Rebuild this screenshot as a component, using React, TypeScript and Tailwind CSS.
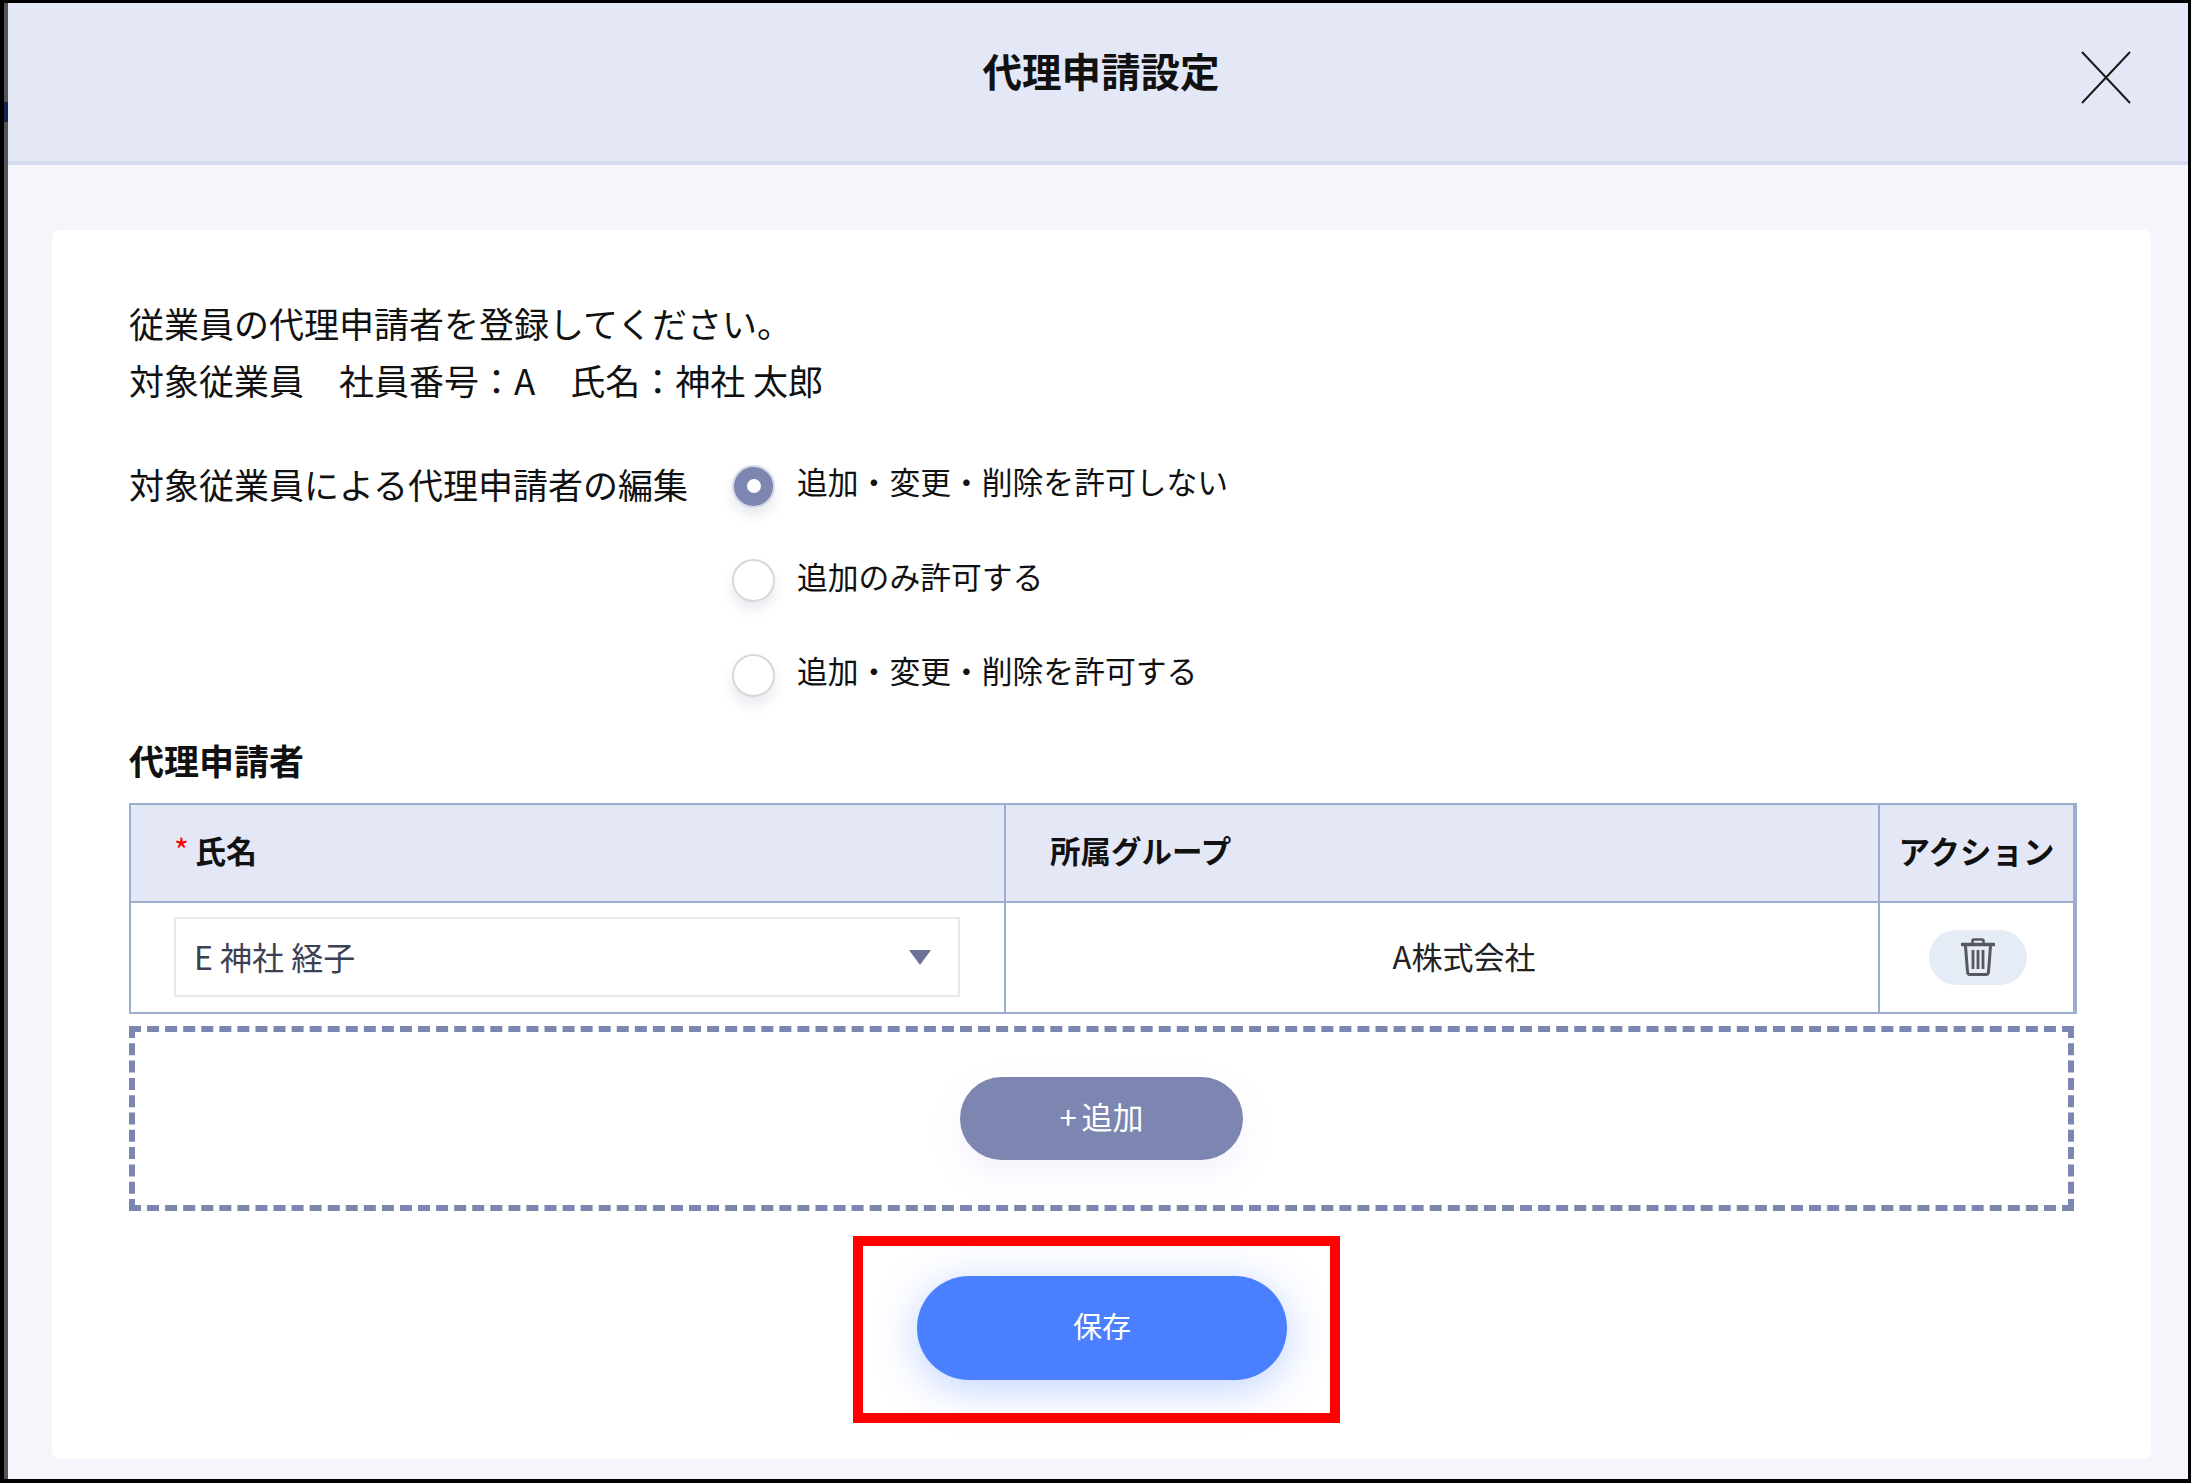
import React from "react";

function Radio({ checked, label }: { checked?: boolean; label: string }) {
  return (
    <div className="flex h-[94.5px] items-center">
      <span
        className={
          checked
            ? "flex h-[43px] w-[43px] items-center justify-center rounded-full border-2 border-[#d6d8e4] bg-[#7d86b0] shadow-[0_8px_12px_rgba(120,125,160,0.16)]"
            : "flex h-[43px] w-[43px] items-center justify-center rounded-full border-2 border-[#d8d8d8] bg-white shadow-[0_8px_12px_rgba(120,125,160,0.16)]"
        }
      >
        {checked ? <span className="h-[14px] w-[14px] rounded-full bg-white" /> : null}
      </span>
      <span className="mb-[10px] ml-[22px] text-[30.8px] leading-[48px] text-[#111]">{label}</span>
    </div>
  );
}

export default function App() {
  return (
    <div className="relative h-[1483px] w-[2191px] bg-white font-['Noto_Sans_CJK_JP','Noto_Sans',sans-serif]">
      <div className="flex h-full w-full flex-col border-t-[3px] border-r-[3px] border-b-[4px] border-l-[4px] border-black">
        <div className="relative flex h-full flex-col border-l-4 border-[#555] bg-[#f4f6fb]">
          <span className="absolute top-[99px] left-[-4px] h-[20px] w-[4px] bg-[#16264d]" />
          <header className="relative flex h-[162px] shrink-0 items-center justify-center border-b-4 border-[#d5dcf2] bg-[#e4e8f6] pb-[24px] pl-[6px]">
            <h1 className="text-[39.5px] leading-[56px] font-bold text-[#111]">代理申請設定</h1>
            <svg
              className="absolute top-[48px] right-[57px]"
              width="50"
              height="53"
              viewBox="0 0 50 53"
              fill="none"
              stroke="#1a1a1a"
              strokeWidth="2"
            >
              <path d="M1 1 L49 52 M49 1 L1 52" />
            </svg>
          </header>
          <div className="flex-1 pt-[65px] pr-[37px] pb-[20px] pl-[44px]">
            <main className="flex h-full flex-col rounded-lg bg-white pt-[64px] pr-[73px] pl-[78px]">
              <div className="ml-[-1px] text-[35px] leading-[57px] text-[#111]">
                <p>従業員の代理申請者を登録してください。</p>
                <p>対象従業員　社員番号：A　氏名：神社 太郎</p>
              </div>

              <div className="mt-[31px] ml-[-1px] flex">
                <div className="mt-[21px] w-[603px] text-[35px] leading-[48px] text-[#111]">対象従業員による代理申請者の編集</div>
                <div className="flex flex-col">
                  <Radio checked label="追加・変更・削除を許可しない" />
                  <Radio label="追加のみ許可する" />
                  <Radio label="追加・変更・削除を許可する" />
                </div>
              </div>

              <h2 className="mt-[13px] mb-[19px] ml-[-1px] text-[35px] leading-[48px] font-bold text-[#111]">代理申請者</h2>

              <div className="ml-[-1px] grid w-[1948px] grid-cols-[875px_874px_1fr] grid-rows-[98px_109px] border-2 border-r-4 border-[#9cadcf]">
                <div className="flex items-center border-r-2 border-b-2 border-[#9cadcf] bg-[#e4e8f6] pb-[4px] pl-[43px] text-[31px] font-bold text-[#111]">
                  <span className="mr-[6px] mb-[4px] text-[32px] leading-none font-normal text-[#f00]">*</span>
                  氏名
                </div>
                <div className="flex items-center border-r-2 border-b-2 border-[#9cadcf] bg-[#e4e8f6] pb-[4px] pl-[44px] text-[30.5px] font-bold text-[#111]">
                  所属グループ
                </div>
                <div className="flex items-center justify-center border-b-2 border-[#9cadcf] bg-[#e4e8f6] pb-[4px] text-[31.5px] font-bold text-[#111]">
                  アクション
                </div>
                <div className="flex items-center border-r-2 border-[#9cadcf] pr-[44px] pl-[43px]">
                  <div className="flex h-[80px] w-full items-center justify-between border-2 border-[#e8e8e8] pr-[27px] pl-[18px] text-[32px] text-[#3b4053]">
                    <span className="mb-[2px]">E 神社 経子</span>
                    <svg width="22" height="15" viewBox="0 0 22 15">
                      <path d="M0 0 H22 L11 15 Z" fill="#6b7399" />
                    </svg>
                  </div>
                </div>
                <div className="flex items-center justify-center border-r-2 border-[#9cadcf] pb-[2px] pl-[44px] text-[31px] text-[#222]">A株式会社</div>
                <div className="flex items-center justify-center pl-[2px]">
                  <span className="flex h-[55px] w-[98px] items-center justify-center rounded-full bg-[#e6ecf5]">
                    <svg width="34" height="38" viewBox="0 0 34 38" fill="none" stroke="#55585d">
                      <path d="M11.5 6 V3 Q11.5 1.5 13 1.5 H21 Q22.5 1.5 22.5 3 V6" strokeWidth="2.6" />
                      <path d="M1 6.5 H33" strokeWidth="3.4" strokeLinecap="round" />
                      <path d="M4.5 8 L6.5 34 Q6.7 36.5 9 36.5 H25 Q27.3 36.5 27.5 34 L29.5 8" strokeWidth="3" />
                      <path d="M12 12 V31 M17 12 V31 M22 12 V31" strokeWidth="2.8" />
                    </svg>
                  </span>
                </div>
              </div>

              <div className="mt-[12px] ml-[-1px] flex h-[185px] w-[1945px] items-center justify-center border-[6px] border-dashed border-[#7d86b0]">
                <button className="h-[83px] w-[283px] rounded-full bg-[#7d86b0] pb-[4px] text-[31px] text-white shadow-[0_14px_34px_rgba(170,140,230,0.12)]">
                  <span className="mr-[5px]">+</span>追加
                </button>
              </div>

              <div className="mt-[65px] flex w-[1944px] justify-center">
                <div className="relative">
                  <button className="h-[104px] w-[370px] rounded-full bg-[#4a80ff] pb-[4px] text-[29px] text-white shadow-[0_8px_44px_rgba(74,128,255,0.36)]">
                    保存
                  </button>
                  <div className="absolute top-[-40px] left-[-64px] h-[187px] w-[487px] border-10 border-[#f00]" />
                </div>
              </div>
            </main>
          </div>
        </div>
      </div>
    </div>
  );
}
